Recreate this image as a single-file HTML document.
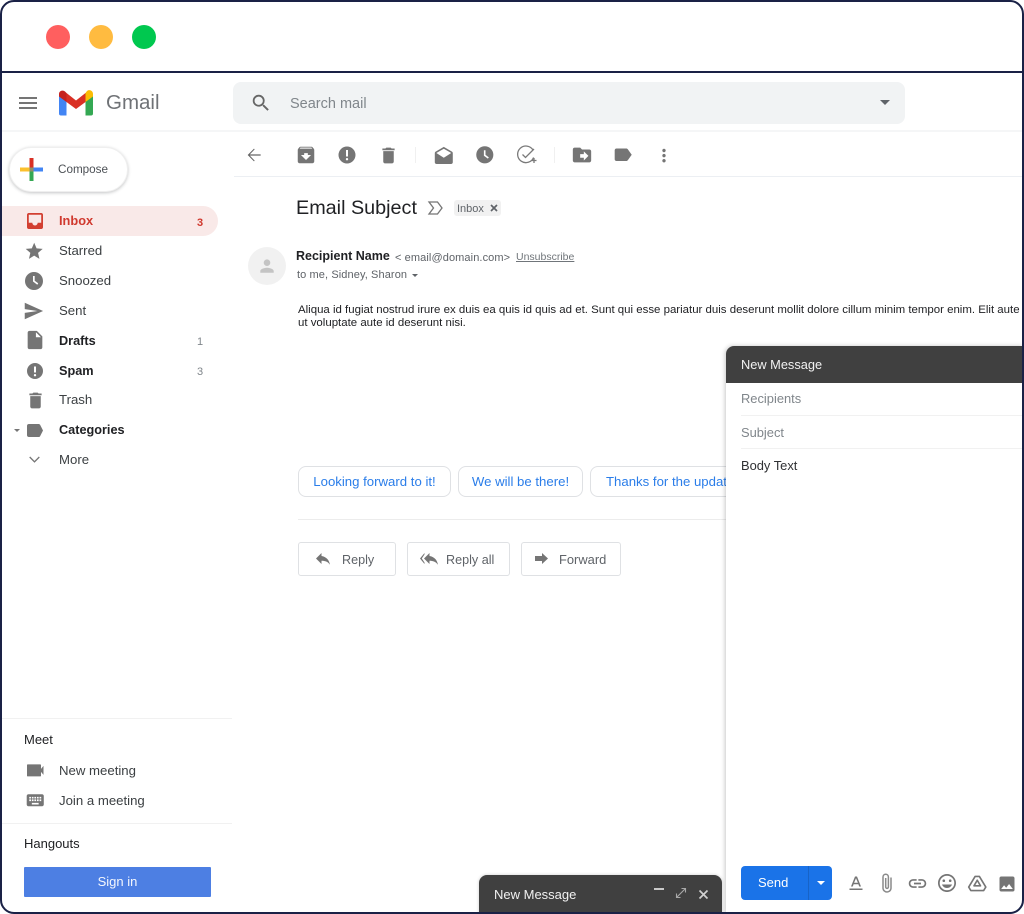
<!DOCTYPE html>
<html lang="en">
<head>
<meta charset="utf-8">
<title>Gmail</title>
<style>
html,body{margin:0;padding:0;background:#fff}
body{width:1024px;height:914px;position:relative;overflow:hidden;font-family:"Liberation Sans",sans-serif;color:#3c4043}
.t{position:absolute;white-space:nowrap;line-height:18px;font-size:13.2px}
.b{font-weight:700;color:#202124;font-size:12.7px}
.box{position:absolute;box-sizing:border-box}
svg{position:absolute;overflow:visible}
.i{fill:#757575}
.btn{position:absolute;box-sizing:border-box;border:1px solid #dfe1e4;border-radius:3px;background:#fff}
.chip{position:absolute;box-sizing:border-box;border:1px solid #dfe1e4;border-radius:8px;background:#fff;height:31px;top:466px;color:#2a7de9;font-size:13.2px;line-height:29px;text-align:center;white-space:nowrap;overflow:hidden}
</style>
</head>
<body>
<!-- title dots -->
<div class="box" style="left:46px;top:25px;width:24px;height:24px;border-radius:50%;background:#ff5f5f"></div>
<div class="box" style="left:89px;top:25px;width:24px;height:24px;border-radius:50%;background:#ffbb40"></div>
<div class="box" style="left:132px;top:25px;width:24px;height:24px;border-radius:50%;background:#00c84f"></div>
<div class="box" style="left:0;top:71px;width:1024px;height:2px;background:#1a2146"></div>

<!-- header -->
<svg style="left:16px;top:91px" width="24" height="24" viewBox="0 0 24 24"><path class="i" d="M3 18h18v-2H3v2zm0-5h18v-2H3v2zm0-7v2h18V6H3z"/></svg>
<svg style="left:59px;top:90px" width="34" height="26" viewBox="0 0 34 26">
<path fill="#4285f4" d="M0 6v17.500a2 2 0 0 0 2 2h5.500V11z"/>
<path fill="#34a853" d="M26.500 11v14.500H32a2 2 0 0 0 2-2V6z"/>
<path fill="#fbbc04" d="M26.500 3v9L34 6.500V4c0-3.300-3.700-5-6-3z"/>
<path fill="#d93025" d="M7.500 12V3L17 10.500 26.500 3v9L17 19z"/>
<path fill="#c5221f" d="M0 4v2.500L7.500 12V3L6 1.500C3.700-.3 0 .8 0 4z"/>
</svg>
<div class="t" style="left:106px;top:90px;font-size:20.500px;line-height:26px;color:#6f7276">Gmail</div>

<div class="box" style="left:233px;top:82px;width:672px;height:42px;border-radius:8px;background:#f1f3f4"></div>
<svg style="left:250px;top:92px" width="22" height="22" viewBox="0 0 24 24"><path fill="#666" d="M15.500 14h-.790l-.280-.270A6.470 6.470 0 0 0 16 9.500 6.500 6.500 0 1 0 9.500 16c1.610 0 3.090-.590 4.230-1.570l.270.280v.790l5 4.990L20.490 19l-4.990-5zm-6 0C7.010 14 5 11.990 5 9.500S7.010 5 9.500 5 14 7.010 14 9.500 11.990 14 9.500 14z"/></svg>
<div class="t" style="left:290px;top:95px;font-size:14.500px;color:#80868b">Search mail</div>
<svg style="left:880px;top:100px" width="10" height="5" viewBox="0 0 10 5"><path fill="#5f6368" d="M0 0h10L5 5z"/></svg>
<div class="box" style="left:2px;top:130px;width:1020px;height:2px;background:#f5f6f7"></div>

<!-- sidebar -->
<div class="box" style="left:9px;top:147px;width:119px;height:45px;border-radius:23px;background:#fff;border:1px solid #efefef;box-shadow:0 1px 3px rgba(60,64,67,.3)"></div>
<svg style="left:20px;top:158px" width="23" height="23" viewBox="0 0 23 23">
<rect x="0" y="9.500" width="10" height="4" fill="#fbc02d"/>
<rect x="13" y="9.500" width="10" height="4" fill="#4285f4"/>
<rect x="9.500" y="13" width="4" height="10" fill="#34a853"/>
<rect x="9.500" y="0" width="4" height="11" fill="#d93025"/>
<rect x="9.500" y="9.500" width="4" height="4" fill="#8e8e6a"/>
</svg>
<div class="t" style="left:58px;top:161px;font-size:11.700px;color:#4d5156">Compose</div>

<div class="box" style="left:2px;top:206px;width:216px;height:30px;border-radius:0 15px 15px 0;background:#f9e9e8"></div>
<svg style="left:27px;top:213px" width="16" height="16" viewBox="0 0 18 18"><path fill="#d23f31" d="M16 0H2C.900 0 0 .900 0 2v14c0 1.100.900 2 2 2h14c1.100 0 2-.900 2-2V2c0-1.100-.900-2-2-2zm0 11h-4c0 1.660-1.340 3-3 3s-3-1.340-3-3H2V2h14v9z"/></svg>
<div class="t" style="left:59px;top:212px;font-weight:700;color:#d0392e;font-size:12.800px">Inbox</div>
<div class="t" style="left:197px;top:214px;font-weight:700;color:#d0392e;font-size:11px">3</div>

<svg style="left:24px;top:241px" width="20.400" height="20.400" viewBox="0 0 24 24"><path class="i" d="M12 17.270L18.180 21l-1.640-7.030L22 9.240l-7.190-.610L12 2 9.190 8.630 2 9.240l5.460 4.730L5.820 21z"/></svg>
<div class="t" style="left:59px;top:242px">Starred</div>

<svg style="left:22px;top:269px" width="24" height="24" viewBox="0 0 24 24"><path class="i" d="M12 3a9 9 0 1 0 0 18 9 9 0 0 0 0-18zm3.300 12.700L11 12.500V7h1.700v4.700l3.500 2.600z"/></svg>
<div class="t" style="left:59px;top:272px">Snoozed</div>

<svg style="left:22.300px;top:299.500px" width="22" height="22" viewBox="0 0 24 24"><path class="i" d="M3 21l20-9L3 3v7l14 2-14 2z"/></svg>
<div class="t" style="left:59px;top:302px">Sent</div>

<svg style="left:23.500px;top:329px" width="22" height="22" viewBox="0 0 24 24"><path class="i" d="M14 2H6C4.900 2 4 2.900 4 4v16c0 1.100.900 2 2 2h12c1.100 0 2-.900 2-2V8l-6-6zm-1 7V3.500L18.500 9H13z"/></svg>
<div class="t b" style="left:59px;top:332px">Drafts</div>
<div class="t" style="left:197px;top:333px;font-size:11px;color:#80868b">1</div>

<svg style="left:23px;top:358.500px" width="24" height="24" viewBox="0 0 24 24"><path class="i" fill-rule="evenodd" d="M12 4a8 8 0 1 0 0 16 8 8 0 0 0 0-16zm-1 3.500h2v6h-2zm1 7.500a1.200 1.200 0 1 1 0 2.400 1.200 1.200 0 0 1 0-2.400z"/></svg>
<div class="t b" style="left:59px;top:362px">Spam</div>
<div class="t" style="left:197px;top:363px;font-size:11px;color:#80868b">3</div>

<svg style="left:24.500px;top:389.500px" width="21" height="21" viewBox="0 0 24 24"><path class="i" d="M6 19c0 1.100.900 2 2 2h8c1.100 0 2-.900 2-2V7H6v12zM19 4h-3.500l-1-1h-5l-1 1H5v2h14V4z"/></svg>
<div class="t" style="left:59px;top:391px">Trash</div>

<svg style="left:14px;top:429px" width="6" height="3" viewBox="0 0 6 3"><path class="i" d="M0 0h6L3 3z"/></svg>
<svg style="left:27px;top:424px" width="16" height="13" viewBox="0 0 16 13"><path class="i" d="M2 0h9.500c.7 0 1.300.3 1.600.800L16 6.500l-2.900 5.700c-.3.500-.9.800-1.600.800H2a2 2 0 0 1-2-2V2a2 2 0 0 1 2-2z"/></svg>
<div class="t b" style="left:59px;top:421px">Categories</div>

<svg style="left:29px;top:456px" width="11" height="7" viewBox="0 0 11 7"><path d="M.7 1l4.800 4.800L10.300 1" fill="none" stroke="#757575" stroke-width="1.300"/></svg>
<div class="t" style="left:59px;top:451px">More</div>

<div class="box" style="left:2px;top:718px;width:230px;height:1px;background:#f1f1f1"></div>
<div class="t" style="left:24px;top:731px;font-size:13px;color:#202124">Meet</div>
<svg style="left:23px;top:759px" width="24" height="24" viewBox="0 0 24 24"><path class="i" d="M18 10.500V6.800c0-.500-.400-.800-.800-.800H4.800c-.500 0-.800.300-.800.800v10.500c0 .500.300.700.800.700h12.400c.400 0 .800-.200.800-.700v-3.800l2.500 3V7.500z" transform="translate(0 -.6)"/></svg>
<div class="t" style="left:59px;top:762px">New meeting</div>
<svg style="left:24.500px;top:789.500px" width="20.500" height="20.500" viewBox="0 0 24 24"><path class="i" d="M20 5H4C2.900 5 2 5.900 2 7v10c0 1.100.900 2 2 2h16c1.100 0 2-.900 2-2V7c0-1.100-.900-2-2-2zm-9 3h2v2h-2V8zm0 3h2v2h-2v-2zM8 8h2v2H8V8zm0 3h2v2H8v-2zm-1 2H5v-2h2v2zm0-3H5V8h2v2zm9 7H8v-2h8v2zm0-4h-2v-2h2v2zm0-3h-2V8h2v2zm3 3h-2v-2h2v2zm0-3h-2V8h2v2z"/></svg>
<div class="t" style="left:59px;top:792px">Join a meeting</div>
<div class="box" style="left:2px;top:823px;width:230px;height:1px;background:#f1f1f1"></div>
<div class="t" style="left:24px;top:835px;font-size:13px;color:#202124">Hangouts</div>
<div class="box" style="left:24px;top:867px;width:187px;height:30px;background:#4d7fe3;border-radius:1px;color:#f4f7fd;font-size:13px;line-height:29px;text-align:center">Sign in</div>

<!-- toolbar -->
<svg style="left:244px;top:145px" width="20" height="20" viewBox="0 0 24 24"><path fill="#666" d="M20 11.200H7l5.800-5.900L12 4.400 4.400 12l7.600 7.600.8-.9L7 12.800h13z"/></svg>
<svg style="left:295px;top:144px" width="22" height="22" viewBox="0 0 24 24"><path class="i" d="M20.500 5.200l-1.400-1.700C18.900 3.200 18.500 3 18 3H6c-.500 0-.900.200-1.200.500L3.500 5.200C3.200 5.600 3 6 3 6.500V19c0 1.100.900 2 2 2h14c1.100 0 2-.900 2-2V6.500c0-.500-.200-.900-.500-1.300zM12 17.500L6.500 12H10v-2h4v2h3.500L12 17.500zM5.100 5l.800-1h12l.900 1H5.100z"/></svg>
<svg style="left:335px;top:143px" width="24" height="24" viewBox="0 0 24 24"><path class="i" fill-rule="evenodd" d="M12 3.500a8.500 8.500 0 1 0 0 17 8.500 8.500 0 0 0 0-17zm-1 3.500h2v6.500h-2zm1 8a1.200 1.200 0 1 1 0 2.400 1.200 1.200 0 0 1 0-2.400z"/></svg>
<svg style="left:377.500px;top:144.500px" width="21" height="21" viewBox="0 0 24 24"><path class="i" d="M6 19c0 1.100.900 2 2 2h8c1.100 0 2-.900 2-2V7H6v12zM19 4h-3.500l-1-1h-5l-1 1H5v2h14V4z"/></svg>
<div class="box" style="left:415px;top:147px;width:1px;height:16px;background:#f0f0f0"></div>
<svg style="left:433px;top:145.500px" width="21.600" height="21.600" viewBox="0 0 24 24"><path class="i" d="M21.990 8c0-.720-.370-1.350-.940-1.700L12 1 2.950 6.300C2.380 6.650 2 7.280 2 8v10c0 1.100.900 2 2 2h16c1.100 0 2-.900 2-2l-.010-10zM12 13L3.740 7.840 12 3l8.260 4.840L12 13z"/></svg>
<svg style="left:474px;top:144px" width="21.600" height="21.600" viewBox="0 0 24 24"><path class="i" d="M12 2.500a9.500 9.500 0 1 0 0 19 9.500 9.500 0 0 0 0-19zm3.400 13.700L11 13V7h1.800v5.100l3.700 2.700z"/></svg>
<svg style="left:514px;top:143px" width="26" height="24" viewBox="0 0 26 24"><path fill="none" stroke="#7a7a7a" stroke-width="1.300" d="M19 7a8.300 8.300 0 1 0 .600 7.500M8.500 11.500l3 3L20 6M17.500 17.500h5M20 15v5"/></svg>
<div class="box" style="left:554px;top:147px;width:1px;height:16px;background:#f0f0f0"></div>
<svg style="left:571px;top:144px" width="22" height="22" viewBox="0 0 24 24"><path class="i" d="M20 6h-8l-2-2H4c-1.100 0-2 .900-2 2v12c0 1.100.900 2 2 2h16c1.100 0 2-.900 2-2V8c0-1.100-.900-2-2-2zm-6 12v-3h-4v-4h4V8l5 5-5 5z"/></svg>
<svg style="left:612px;top:144px" width="21.500" height="21.500" viewBox="0 0 24 24"><path class="i" d="M17.630 5.840C17.270 5.330 16.670 5 16 5L5 5.010C3.900 5.010 3 5.900 3 7v10c0 1.100.900 1.990 2 1.990L16 19c.670 0 1.270-.330 1.630-.840L22 12l-4.370-6.160z"/></svg>
<svg style="left:652px;top:143px" width="24" height="24" viewBox="0 0 24 24"><path class="i" d="M12 8c1.100 0 2-.900 2-2s-.900-2-2-2-2 .900-2 2 .900 2 2 2zm0 2c-1.100 0-2 .900-2 2s.900 2 2 2 2-.900 2-2-.900-2-2-2zm0 6c-1.100 0-2 .900-2 2s.900 2 2 2 2-.900 2-2-.900-2-2-2z" transform="translate(1.800 2.400) scale(.85)"/></svg>
<div class="box" style="left:234px;top:176px;width:788px;height:1px;background:#eceff3"></div>

<!-- email -->
<div class="t" style="left:296px;top:195px;font-size:19.800px;line-height:26px;color:#202124">Email Subject</div>
<svg style="left:428px;top:201px" width="15" height="14" viewBox="0 0 15 14"><path fill="none" stroke="#757575" stroke-width="1.300" d="M1 1h8.500l4.500 6-4.500 6H1l4.500-6z"/></svg>
<div class="box" style="left:454px;top:200px;width:47px;height:16px;border-radius:3px;background:#f1f1f1"></div>
<div class="t" style="left:457px;top:201px;font-size:11px;line-height:17px;color:#5f6368">Inbox</div>
<svg style="left:490px;top:204px" width="8" height="8" viewBox="0 0 8 8"><path d="M1 1l6 6M7 1L1 7" stroke="#5f6368" stroke-width="1.700"/></svg>

<div class="box" style="left:248px;top:247px;width:38px;height:38px;border-radius:50%;background:#f1f1f1"></div>
<svg style="left:257px;top:256px" width="20" height="20" viewBox="0 0 20 20"><path fill="#c4c4c4" d="M10 10a3.300 3.300 0 1 0 0-6.600 3.300 3.300 0 0 0 0 6.600zm0 1.700c-2.300 0-6.700 1.100-6.700 3.300v1.700h13.400V15c0-2.200-4.400-3.300-6.700-3.300z"/></svg>
<div class="t" style="left:296px;top:247px;font-size:12.500px;font-weight:700;color:#202124">Recipient Name</div>
<div class="t" style="left:395px;top:249px;font-size:11px;color:#5f6368;letter-spacing:.1px">&lt; email@domain.com&gt;</div>
<div class="t" style="left:516px;top:248px;font-size:10.500px;color:#70757a;text-decoration:underline">Unsubscribe</div>
<div class="t" style="left:297px;top:266px;font-size:11px;color:#5f6368;letter-spacing:.1px">to me, Sidney, Sharon</div>
<svg style="left:412px;top:274px" width="6" height="3" viewBox="0 0 6 3"><path fill="#5f6368" d="M0 0h6L3 3z"/></svg>

<div class="t" style="left:298px;top:304px;font-size:11.450px;line-height:13px;color:#202124">Aliqua id fugiat nostrud irure ex duis ea quis id quis ad et. Sunt qui esse pariatur duis deserunt mollit dolore cillum minim tempor enim. Elit aute<br>ut voluptate aute id deserunt nisi.</div>

<div class="chip" style="left:298px;width:153px">Looking forward to it!</div>
<div class="chip" style="left:458px;width:125px">We will be there!</div>
<div class="chip" style="left:590px;width:160px;text-align:left;padding-left:15px">Thanks for the update</div>
<div class="box" style="left:298px;top:519px;width:430px;height:1px;background:#ececec"></div>

<div class="btn" style="left:298px;top:542px;width:98px;height:34px"></div>
<svg style="left:316px;top:553px" width="14" height="12" viewBox="0 0 14 12"><path class="i" d="M5.500 3V0L0 5.500 5.500 11V7.800c3.800 0 6.500 1 8.500 4C13.300 7.500 10.500 3.700 5.500 3z"/></svg>
<div class="t" style="left:342px;top:551px;font-size:12.600px;color:#5f6368">Reply</div>
<div class="btn" style="left:407px;top:542px;width:103px;height:34px"></div>
<svg style="left:420px;top:553px" width="18" height="12" viewBox="0 0 18 12"><path class="i" d="M9.500 3V0L4 5.500 9.500 11V7.800c3.500 0 6.300 1 8.500 4C17.300 7.500 14.500 3.700 9.500 3zM4.500 1.500V0L0 5.500 4.500 11V9.500L1.800 5.500z"/></svg>
<div class="t" style="left:446px;top:551px;font-size:12.600px;color:#5f6368">Reply all</div>
<div class="btn" style="left:521px;top:542px;width:100px;height:34px"></div>
<svg style="left:535px;top:553px" width="13" height="11" viewBox="0 0 13 11"><path class="i" d="M0 3h7V0l6 5.500L7 11V8H0z"/></svg>
<div class="t" style="left:559px;top:551px;font-size:12.900px;color:#5f6368">Forward</div>

<!-- compose window -->
<div class="box" style="left:726px;top:346px;width:298px;height:568px;background:#fff;border-radius:8px 0 0 0;box-shadow:-1px 0 5px rgba(0,0,0,.22)"></div>
<div class="box" style="left:726px;top:346px;width:298px;height:37px;background:#404040;border-radius:8px 0 0 0"></div>
<div class="t" style="left:741px;top:356px;font-size:12.800px;color:#f1f1f1">New Message</div>
<div class="t" style="left:741px;top:390px;font-size:12.900px;color:#80868b">Recipients</div>
<div class="box" style="left:741px;top:415px;width:283px;height:1px;background:#f1f1f1"></div>
<div class="t" style="left:741px;top:424px;font-size:12.900px;color:#80868b">Subject</div>
<div class="box" style="left:741px;top:448px;width:283px;height:1px;background:#f1f1f1"></div>
<div class="t" style="left:741px;top:457px;font-size:12.900px;color:#303134">Body Text</div>

<div class="box" style="left:741px;top:866px;width:91px;height:34px;background:#1a73e8;border-radius:4px"></div>
<div class="box" style="left:808px;top:866px;width:1px;height:34px;background:#1763c7"></div>
<div class="t" style="left:758px;top:874px;font-size:13px;color:#fff">Send</div>
<svg style="left:817px;top:881px" width="8" height="4" viewBox="0 0 8 4"><path fill="#fff" d="M0 0h8L4 4z"/></svg>

<svg style="left:844px;top:871px" width="24" height="24" viewBox="0 0 24 24"><path class="i" d="M5.500 17.500h13V19h-13zM11 5.500l-4 10h1.800l.8-2.200h4.800l.8 2.200H17l-4-10zm-.9 6.300L12 7.200l1.900 4.600z"/></svg>
<svg style="left:875px;top:871px" width="24" height="24" viewBox="0 0 24 24"><path fill="none" stroke="#8a8a8a" stroke-width="1.500" d="M16 6.500V17a4 4 0 0 1-8 0V6a2.700 2.700 0 0 1 5.400 0v10a1.300 1.300 0 0 1-2.700 0V7"/></svg>
<svg style="left:906.500px;top:872.500px" width="21" height="21" viewBox="0 0 24 24"><path class="i" d="M3.900 12c0-1.710 1.390-3.100 3.100-3.100h4V7H7c-2.760 0-5 2.240-5 5s2.240 5 5 5h4v-1.900H7c-1.710 0-3.100-1.390-3.100-3.100zM8 13h8v-2H8v2zm9-6h-4v1.900h4c1.710 0 3.100 1.390 3.100 3.100s-1.390 3.100-3.100 3.100h-4V17h4c2.760 0 5-2.240 5-5s-2.240-5-5-5z"/></svg>
<svg style="left:935px;top:871px" width="24" height="24" viewBox="0 0 24 24"><path class="i" d="M11.990 3C7.020 3 3 7.030 3 12s4.020 9 8.990 9C16.970 21 21 16.970 21 12s-4.030-9-9.010-9zM12 19.300a7.300 7.300 0 1 1 0-14.600 7.300 7.300 0 0 1 0 14.600zM8.800 11a1.300 1.300 0 1 0 0-2.600 1.300 1.300 0 0 0 0 2.600zm6.400 0a1.300 1.300 0 1 0 0-2.600 1.300 1.300 0 0 0 0 2.600zM12 17c2.300 0 4.300-1.400 5-3.500H7c.700 2.100 2.700 3.500 5 3.500z"/></svg>
<svg style="left:966.700px;top:873px" width="20.500" height="20.500" viewBox="0 0 24 24"><path fill="none" stroke="#757575" stroke-width="1.900" stroke-linejoin="round" d="M9.500 4h5L22 16.500 19.500 20.500h-15L2 16.500zM12 8.500L8.200 15h7.600z"/></svg>
<svg style="left:996.500px;top:873.500px" width="20" height="20" viewBox="0 0 24 24"><path class="i" d="M21 19V5c0-1.100-.900-2-2-2H5c-1.100 0-2 .900-2 2v14c0 1.100.900 2 2 2h14c1.100 0 2-.900 2-2zM8.500 13.500l2.500 3.010L14.500 12l4.500 6H5l3.500-4.500z"/></svg>

<!-- minimized compose -->
<div class="box" style="left:479px;top:875px;width:243px;height:39px;background:#404040;border-radius:8px 8px 0 0;box-shadow:0 0 3px rgba(0,0,0,.2)"></div>
<div class="t" style="left:494px;top:886px;font-size:13px;color:#f1f1f1">New Message</div>
<div class="box" style="left:654px;top:888px;width:10px;height:2px;background:#c9c9c9"></div>
<svg style="left:676px;top:888px" width="10" height="10" viewBox="0 0 10 10"><path d="M.5 9.500l9-9M5.500.5h4v4M.5 5.500v4h4" fill="none" stroke="#a8a8a8" stroke-width="1.100"/></svg>
<svg style="left:699px;top:890px" width="9" height="9" viewBox="0 0 9 9"><path d="M.5.5l8 8M8.500.5l-8 8" stroke="#d0d0d0" stroke-width="1.700"/></svg>

<!-- frame -->
<div class="box" style="left:0;top:0;width:1024px;height:914px;border:2px solid #1a2146;border-radius:14px;pointer-events:none"></div>
</body>
</html>
